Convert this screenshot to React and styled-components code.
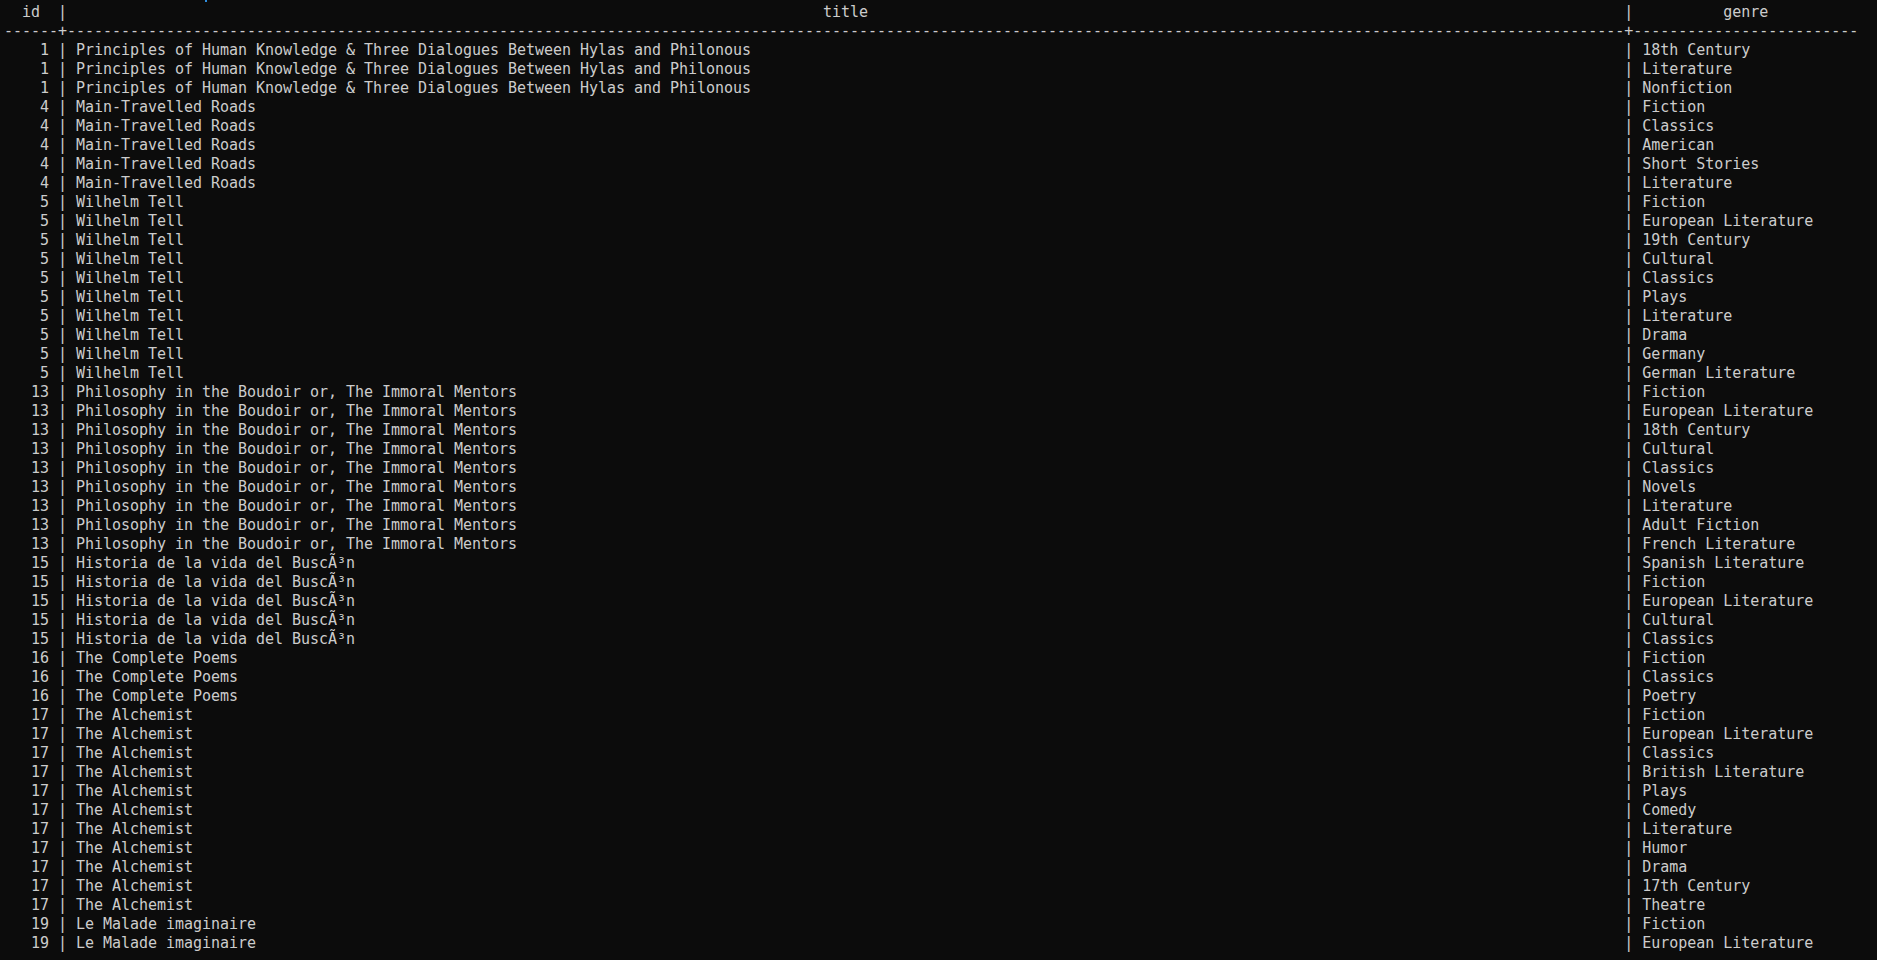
import styled, { createGlobalStyle } from "styled-components"

const GlobalStyle = createGlobalStyle`
html, body {
  margin: 0;
  background: #0c0c0c;
}
`

const Terminal = styled.div`
position: relative;
box-sizing: border-box;
height: 960px;
overflow: hidden;
padding: 3px 0 0 4px;
background: #0c0c0c;
color: #cccccc;
font-family: "DejaVu Sans Mono", "Liberation Mono", monospace;
font-size: 15px;
letter-spacing: -0.03px;
`

const Line = styled.div`
height: 19px;
line-height: 19px;
white-space: pre;
`

// little bit of selection cursor poking in at the top edge
const CursorTip = styled.span`
position: absolute;
top: 0;
left: 205px;
width: 2px;
height: 2px;
background: #2f8fe0;
`

const books = [
    [1, "Principles of Human Knowledge & Three Dialogues Between Hylas and Philonous", ["18th Century", "Literature", "Nonfiction"]],
    [4, "Main-Travelled Roads", ["Fiction", "Classics", "American", "Short Stories", "Literature"]],
    [5, "Wilhelm Tell", ["Fiction", "European Literature", "19th Century", "Cultural", "Classics", "Plays", "Literature", "Drama", "Germany", "German Literature"]],
    [13, "Philosophy in the Boudoir or, The Immoral Mentors", ["Fiction", "European Literature", "18th Century", "Cultural", "Classics", "Novels", "Literature", "Adult Fiction", "French Literature"]],
    [15, "Historia de la vida del BuscÃ³n", ["Spanish Literature", "Fiction", "European Literature", "Cultural", "Classics"]],
    [16, "The Complete Poems", ["Fiction", "Classics", "Poetry"]],
    [17, "The Alchemist", ["Fiction", "European Literature", "Classics", "British Literature", "Plays", "Comedy", "Literature", "Humor", "Drama", "17th Century", "Theatre"]],
    [19, "Le Malade imaginaire", ["Fiction", "European Literature"]],
]

const ID_W = 4
const TITLE_W = 171
const GENRE_W = 23

const center = (s, w) => {
    const left = Math.floor((w - s.length) / 2)
    return " ".repeat(left) + s + " ".repeat(w - s.length - left)
}

const header = ` ${center("id", ID_W)} | ${center("title", TITLE_W)} | ${center("genre", GENRE_W)}`
const divider = `${"-".repeat(ID_W + 2)}+${"-".repeat(TITLE_W + 2)}+${"-".repeat(GENRE_W + 2)}`

const rows = books.flatMap(([id, title, genres]) =>
    genres.map((genre) => ` ${String(id).padStart(ID_W)} | ${title.padEnd(TITLE_W)} | ${genre}`)
)

const App = () => {
    return (
        <>
            <GlobalStyle />
            <Terminal>
                <CursorTip />
                <Line>{header}</Line>
                <Line>{divider}</Line>
                {rows.map((row, i) => (
                    <Line key={i}>{row}</Line>
                ))}
            </Terminal>
        </>
    )
}

export default App
